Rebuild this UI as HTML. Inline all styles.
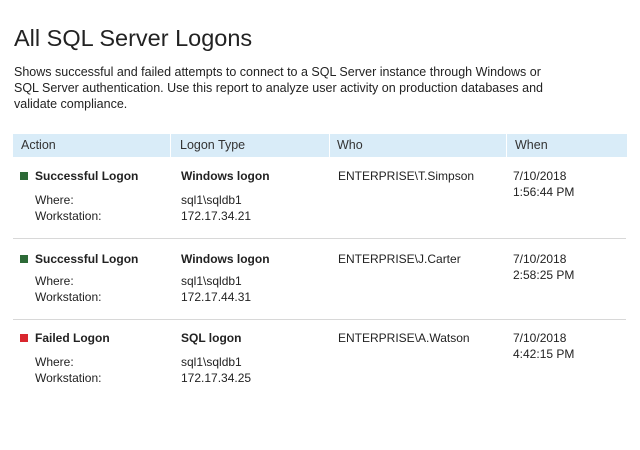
<!DOCTYPE html>
<html><head><meta charset="utf-8"><style>
body{margin:0;width:640px;height:450px;background:#fff;font-family:"Liberation Sans",sans-serif;color:#222;position:relative;overflow:hidden}
div{position:absolute;white-space:nowrap}
.t{font-size:12px;line-height:16px}
.b{font-weight:bold}
.h{font-size:12.5px;color:#333;top:138px}
.sq{width:8px;height:8px}
.sep{left:13px;width:613px;height:1px;background:#d8d8d8}
</style></head><body>
<div style="left:14px;top:25px;font-size:23.5px;color:#222">All SQL Server Logons</div>
<div class="t" style="left:14px;top:64px;font-size:12.5px">Shows successful and failed attempts to connect to a SQL Server instance through Windows or</div>
<div class="t" style="left:14px;top:80px;font-size:12.5px">SQL Server authentication. Use this report to analyze user activity on production databases and</div>
<div class="t" style="left:14px;top:96px;font-size:12.5px">validate compliance.</div>

<div style="left:13px;top:134px;width:614px;height:23px;background:#d9ecf8"></div>
<div style="left:170px;top:134px;width:1px;height:23px;background:#fff"></div>
<div style="left:329px;top:134px;width:1px;height:23px;background:#fff"></div>
<div style="left:506px;top:134px;width:1px;height:23px;background:#fff"></div>
<div class="h" style="left:21px">Action</div>
<div class="h" style="left:180px">Logon Type</div>
<div class="h" style="left:337px">Who</div>
<div class="h" style="left:515px">When</div>

<div class="sq" style="left:20px;top:172px;background:#2d6a37"></div>
<div class="t b" style="left:35px;top:168px">Successful Logon</div>
<div class="t b" style="left:181px;top:168px">Windows logon</div>
<div class="t" style="left:338px;top:168px">ENTERPRISE\T.Simpson</div>
<div class="t" style="left:513px;top:168px">7/10/2018<br>1:56:44 PM</div>
<div class="t" style="left:35px;top:192px">Where:<br>Workstation:</div>
<div class="t" style="left:181px;top:192px">sql1\sqldb1<br>172.17.34.21</div>
<div class="sep" style="top:238px"></div>

<div class="sq" style="left:20px;top:255px;background:#2d6a37"></div>
<div class="t b" style="left:35px;top:251px">Successful Logon</div>
<div class="t b" style="left:181px;top:251px">Windows logon</div>
<div class="t" style="left:338px;top:251px">ENTERPRISE\J.Carter</div>
<div class="t" style="left:513px;top:251px">7/10/2018<br>2:58:25 PM</div>
<div class="t" style="left:35px;top:273px">Where:<br>Workstation:</div>
<div class="t" style="left:181px;top:273px">sql1\sqldb1<br>172.17.44.31</div>
<div class="sep" style="top:319px"></div>

<div class="sq" style="left:20px;top:334px;background:#d9262e"></div>
<div class="t b" style="left:35px;top:330px">Failed Logon</div>
<div class="t b" style="left:181px;top:330px">SQL logon</div>
<div class="t" style="left:338px;top:330px">ENTERPRISE\A.Watson</div>
<div class="t" style="left:513px;top:330px">7/10/2018<br>4:42:15 PM</div>
<div class="t" style="left:35px;top:354px">Where:<br>Workstation:</div>
<div class="t" style="left:181px;top:354px">sql1\sqldb1<br>172.17.34.25</div>
</body></html>
